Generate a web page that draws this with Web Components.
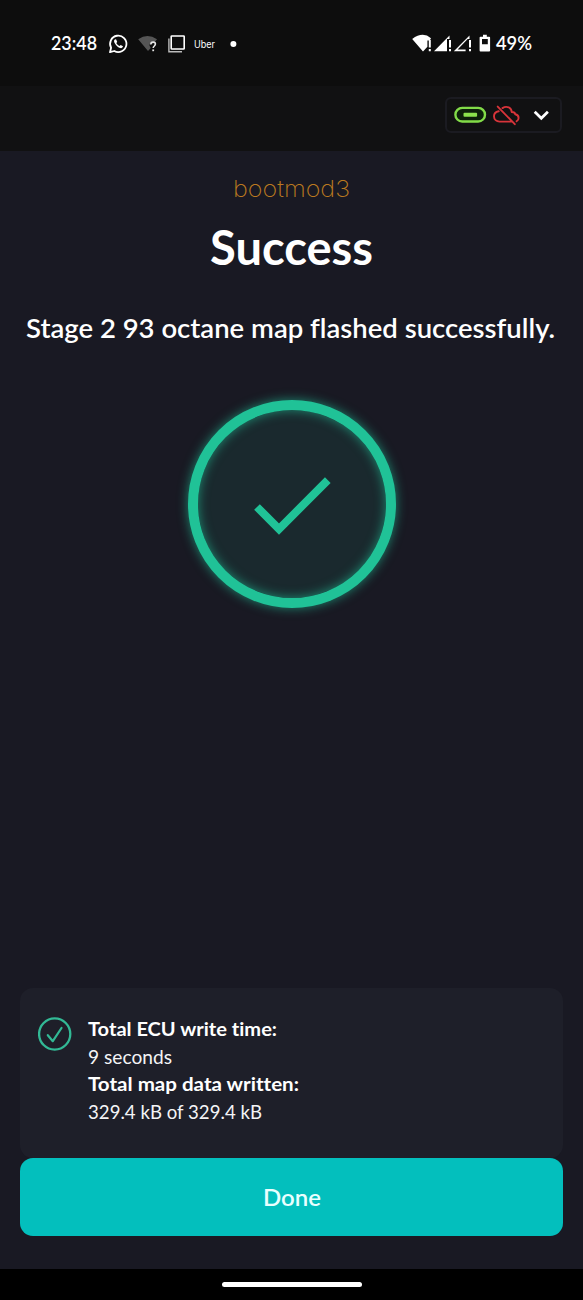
<!DOCTYPE html>
<html lang="en">
<head>
<meta charset="utf-8">
<title>bootmod3</title>
<style>
html,body{margin:0;background:#191923}
body{font-family:Lato,"Open Sans",sans-serif;color:#fff;font-variant-ligatures:none}
</style>
</head>
<body>
<flash-screen></flash-screen>
<script>
const define = (name, html) => customElements.define(name, class extends HTMLElement {
  constructor() {
    super();
    const t = document.createElement('template');
    t.innerHTML = html;
    this.attachShadow({mode: 'open'}).append(t.content.cloneNode(true));
  }
});

/* A line of text set to an exact measure. */
customElements.define('fit-text', class extends HTMLElement {
  connectedCallback() {
    const w = this.getAttribute('w'), h = +this.getAttribute('h'), s = this.getAttribute('s'),
          b = this.getAttribute('b'), mode = this.getAttribute('adjust') || 'spacingAndGlyphs';
    const root = this.shadowRoot || this.attachShadow({mode: 'open'});
    root.innerHTML = `<style>:host{display:block;width:${w}px;height:${h}px}svg{display:block;overflow:visible}text{fill:currentColor;font-size:${s}px}</style>
      <svg width="${w}" height="${h}"><text x="0" y="${b}" textLength="${w}" lengthAdjust="${mode}"></text></svg>`;
    root.querySelector('text').textContent = this.getAttribute('text');
  }
});

define('status-bar', `<style>
:host{display:flex;box-sizing:border-box;height:86px;background:#0d0d0d;padding:33px 51px 0;justify-content:space-between;align-items:flex-start}
div{display:flex;height:22px;align-items:center}
svg{display:block;overflow:visible}
.t{font-weight:600}
.u{font-family:Inter,sans-serif;margin-left:8px}
</style>
<div>
<fit-text class="t" w="46" h="22" s="18.5" b="17" text="23:48"></fit-text>
<svg style="margin-left:11px" width="20" height="20" viewBox="0 0 20 20"><path d="M2 18.2 3.1 13.8A8.2 8.2 0 1 1 6.3 17Z" fill="none" stroke="#fff" stroke-width="1.8" stroke-linejoin="round"/><path d="M7.1 5.3c-1.2.7-1.4 2.1-.5 3.7 1.2 2.3 3 4.1 5.4 5 1.5.5 2.7-.2 3-1.7l-2.3-1.3-1.1 1.1c-1.5-.6-2.6-1.7-3.3-3.1l.9-1-1-2.5z" fill="#fff"/></svg>
<svg style="margin-left:10px" width="20" height="20" viewBox="0 0 20 20"><path d="M.2 5.2Q9.5-1.2 19 5.2L16.2 9Q11.8 7.5 11.5 11.5l1.3 2.5L10 17Z" fill="#555"/><path d="M12.8 10.5c0-1.7 1.1-2.4 2.3-2.4 1.4 0 2.3.8 2.3 2 0 1.9-2.2 1.9-2.2 4" fill="none" stroke="#e6e6e6" stroke-width="1.6"/><path d="M14.3 15.4h1.8v1.8h-1.8z" fill="#e6e6e6"/></svg>
<svg style="margin-left:10px" width="18" height="18" viewBox="0 0 18 18"><rect x="3.2" y="1" width="13" height="13" rx=".6" fill="none" stroke="#fff" stroke-width="1.6"/><path d="M.9 3.5V16.7H14" fill="none" stroke="#bbb" stroke-width="1.4"/></svg>
<fit-text class="u" w="21" h="22" s="9.8" b="14.5" text="Uber"></fit-text>
<svg style="margin-left:15px" width="7" height="7"><circle cx="3.4" cy="3" r="3" fill="#fff"/></svg>
</div>
<div>
<svg width="78" height="22" viewBox="0 0 78 22"><g fill="#fff"><path d="M-6.8 6Q3.8-2 12 5.2L10.8 7.4H8.4v6.3L4 18.4Z" transform="translate(6 0)"/><path d="M15.8 7h2v7.4h-2zm0 9h2v2.2h-2zM36 7h2v7.4h-2zm0 9h2v2.2h-2zM56 7h2v7.4h-2zm0 9h2v2.2h-2z"/><path d="M21 18.3 36.5 2.4V6H34v12.3z"/><path fill-rule="evenodd" d="M40.8 18.3 56.5 2.4V6h-1.8L44.6 16.5h8v1.8z"/><path d="M70 1.8h3.8v1.9h2.4q.9 0 .9.9v12.9q0 .9-.9.9h-8.7q-.9 0-.9-.9V4.6q0-.9.9-.9H70zM69 6v5.2h5.8V6z" fill-rule="evenodd"/></g></svg>
<fit-text class="t" style="margin-left:5px" w="36" h="22" s="18.5" b="17" text="49%"></fit-text>
</div>`);

define('connection-bar', `<style>
:host{display:flex;box-sizing:border-box;height:65px;background:#111112;justify-content:flex-end;padding:11px 21px 0 0}
.box{box-sizing:border-box;width:117px;height:36px;border:2px solid #1b1b21;border-radius:6px;display:flex;align-items:center;padding-left:6.5px}
svg{display:block;overflow:visible}
</style><div class="box">
<svg width="33" height="18"><rect x="1.4" y="1.9" width="29.6" height="13.6" rx="6.8" fill="#0d210b" stroke="#82db48" stroke-width="2.4"/><rect x="9.5" y="6.8" width="13.6" height="4" rx="1" fill="#8be34d"/></svg>
<svg style="margin-left:6px" width="27" height="20" viewBox="0 0 27 20" fill="none" stroke="#d8343a" stroke-width="1.9" stroke-linecap="round" stroke-linejoin="round"><path d="M5.7 6.3C3 6.8 1 8.6 1 11.3c0 3.2 2.4 5.3 5.6 5.3h11.8M9.5 3.1C14 .1 18.6 3.1 18.7 7c2.2-.1 3.5 1 3.5 2.3 2.4.4 3.4 2 3.4 3.6 0 1.5-.8 2.7-2 3.4M4.7 1.6 21.8 19.2"/></svg>
<svg style="margin-left:13px" width="17" height="12"><path d="m1.7 2.7 6.6 6.6 6.6-6.6" fill="none" stroke="#fff" stroke-width="2.7"/></svg>
</div>`);

define('brand-logo', `<style>:host{display:block;color:#bb7920;font-family:Inter,sans-serif;font-weight:200}</style><fit-text w="117" h="22" s="22.5" b="19" text="bootmod3"></fit-text>`);

define('success-mark', `<style>
:host{display:block;width:208px;height:208px}
div{box-sizing:border-box;width:208px;height:208px;border:10px solid #20c297;border-radius:50%;background:#1a292e;box-shadow:0 0 11px #20c297aa,inset 0 0 11px #20c297aa}
svg{display:block;width:188px;height:188px}
</style><div><svg viewBox="0 0 188 188"><path d="m59 97 22 22 48.8-48.8" fill="none" stroke="#20c297" stroke-width="8"/></svg></div>`);

define('result-card', `<style>
:host{display:flex;box-sizing:border-box;width:543px;height:170px;background:#1e1f29;border-radius:13px;padding:28px 18px 0;gap:15.5px;align-items:flex-start}
svg{display:block;flex:none;margin-top:1px}
</style><svg width="34" height="34"><circle cx="16.7" cy="17" r="15.6" fill="none" stroke="#32b995" stroke-width="2.3"/><path d="m9.8 18.2 5 6L23.5 11" fill="none" stroke="#32b995" stroke-width="2.2" stroke-linecap="round" stroke-linejoin="round"/></svg><div><slot></slot></div>`);

define('action-button', `<style>
:host{display:block}
button{display:flex;width:543px;height:78px;border:0;border-radius:13px;background:#03bfbd;color:#e9ffff;justify-content:center;align-items:center;padding:0;font:inherit;font-weight:600}
</style><button><slot></slot></button>`);

define('home-bar', `<style>:host{display:flex;height:31px;background:#000;justify-content:center;align-items:center}i{width:140px;height:5px;border-radius:3px;background:#fff}</style><i></i>`);

define('flash-screen', `<style>
:host{display:flex;flex-direction:column;width:583px;height:1300px;background:#191923;overflow:hidden}
main{flex:1;display:flex;flex-direction:column;align-items:center}
brand-logo{margin-top:27px}
.title{margin-top:21px;font-weight:700}
.msg{margin-top:36px;margin-right:1.5px;font-weight:600}
success-mark{margin-top:43px}
result-card{margin-top:auto;color:#f4f4f6}
.b{font-weight:700;color:#fff}
action-button{margin-bottom:33px}
</style>
<status-bar></status-bar><connection-bar></connection-bar>
<main>
<brand-logo></brand-logo>
<fit-text class="title" w="163" h="58" s="47" b="44" text="Success"></fit-text>
<fit-text class="msg" w="529" h="42" s="26" b="22.5" text="Stage 2 93 octane map flashed successfully."></fit-text>
<success-mark></success-mark>
<result-card>
<fit-text class="b" w="189" h="27.5" s="18.3" b="20" text="Total ECU write time:"></fit-text>
<fit-text w="84" h="27.5" s="18.3" b="20" text="9 seconds"></fit-text>
<fit-text class="b" w="211" h="27.5" s="18.3" b="20" text="Total map data written:"></fit-text>
<fit-text w="174" h="27.5" s="18.3" b="20" text="329.4 kB of 329.4 kB"></fit-text>
</result-card>
<action-button><fit-text w="58" h="30" s="23.8" b="24" text="Done"></fit-text></action-button>
</main>
<home-bar></home-bar>`);
</script>
</body>
</html>
